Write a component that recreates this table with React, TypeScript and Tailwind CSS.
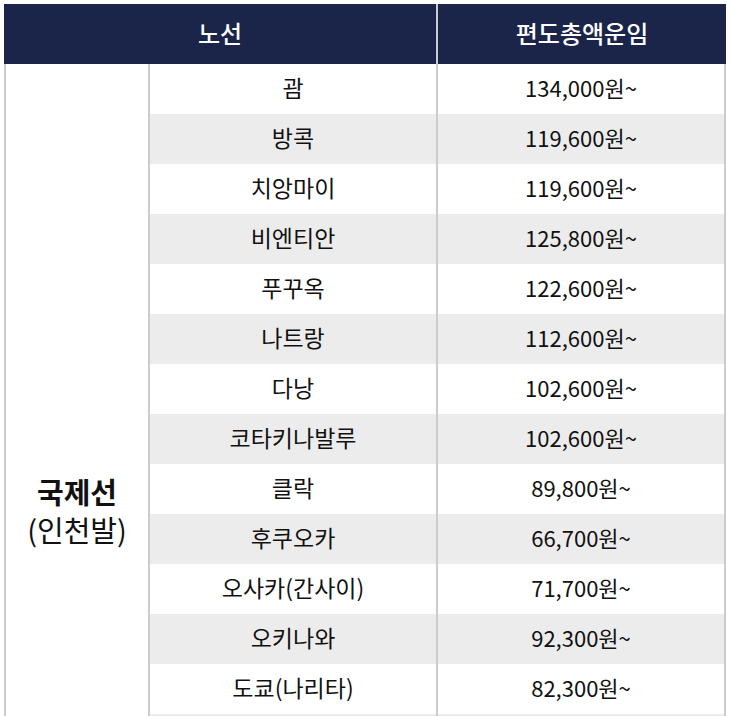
const routes: [string, string][] = [
  ['괌', '134,000원~'],
  ['방콕', '119,600원~'],
  ['치앙마이', '119,600원~'],
  ['비엔티안', '125,800원~'],
  ['푸꾸옥', '122,600원~'],
  ['나트랑', '112,600원~'],
  ['다낭', '102,600원~'],
  ['코타키나발루', '102,600원~'],
  ['클락', '89,800원~'],
  ['후쿠오카', '66,700원~'],
  ['오사카(간사이)', '71,700원~'],
  ['오키나와', '92,300원~'],
  ['도쿄(나리타)', '82,300원~'],
  ['', ''],
];

export default function App() {
  return (
    <div
      className="bg-white min-h-screen pt-[4px] pl-[4px] text-[#111]"
      style={{ fontFamily: '"Noto Sans CJK KR", "Noto Sans", sans-serif' }}
    >
      <div className="w-[722px]">
        <div className="flex h-[60px] bg-[#1b2549] text-white text-[24px] font-medium">
          <div className="w-[432px] flex items-center justify-center pb-[2px]">노선</div>
          <div className="w-[2px] bg-[#c9cbd2]" />
          <div className="flex-1 flex items-center justify-center pb-[2px]">편도총액운임</div>
        </div>
        <div className="flex">
          <div className="w-[146px] shrink-0 border-l-2 border-r-2 border-[#cccccc] bg-white">
            <div className="pt-[408px] flex flex-col items-center text-[29px] leading-[38px]">
              <span className="font-bold">국제선</span>
              <span>(인천발)</span>
            </div>
          </div>
          <div className="flex-1 flex flex-col">
            {routes.map(([name, fare], i) => (
              <div
                key={i}
                className={`flex h-[50px] ${i % 2 === 1 ? 'bg-[#ececec]' : 'bg-white'}`}
              >
                <div className="w-[288px] border-r-2 border-[#cccccc] flex items-center justify-center pb-[3px] text-[23px]">
                  {name}
                </div>
                <div className="flex-1 border-r-2 border-[#cccccc] flex items-center justify-center pb-[3px] text-[22px]">
                  {fare}
                </div>
              </div>
            ))}
          </div>
        </div>
      </div>
    </div>
  );
}
